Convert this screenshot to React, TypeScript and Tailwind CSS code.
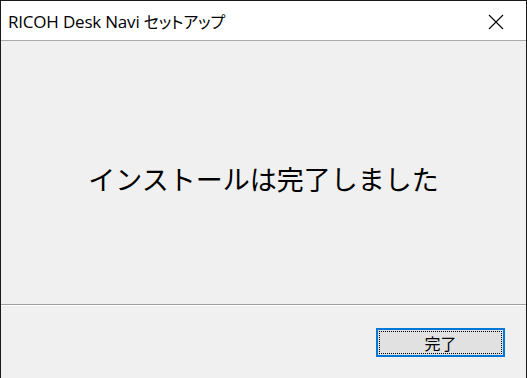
export default function App() {
  return (
    <div className="w-[527px] h-[378px] flex flex-col bg-[#f0f0f0] border-l border-r border-t border-[#1a1a1a] overflow-hidden">
      <div
        className="h-[39px] shrink-0 bg-white flex items-center justify-between pl-[7px] pr-[22px] text-black"
        style={{ fontFamily: '"Open Sans", "Noto Sans CJK JP", sans-serif' }}
      >
        <span className="leading-none mt-[1px] text-[17px] tracking-[-0.2px]">
          RICOH Desk Navi{" "}
          <span
            className="text-[16px]"
            style={{ fontFamily: '"Noto Sans CJK JP", sans-serif', fontFeatureSettings: '"palt"' }}
          >
            セットアップ
          </span>
        </span>
        <svg width="16" height="16" viewBox="0 0 16 16" className="mt-[2px]">
          <path d="M1 1 L15 15 M15 1 L1 15" stroke="#000" strokeWidth="1.1" />
        </svg>
      </div>
      <div className="h-px shrink-0 bg-[#a9a9a9]" />
      <div className="flex-1 flex items-center justify-center pt-[12px]">
        <span
          className="text-[27px] text-black leading-none"
          style={{ fontFamily: '"Noto Sans CJK JP", sans-serif' }}
        >
          インストールは完了しました
        </span>
      </div>
      <div className="h-px shrink-0 bg-[#a0a0a0]" />
      <div className="h-px shrink-0 bg-white" />
      <div className="h-[72px] shrink-0 flex justify-end items-start pt-[22px] pr-[21px]">
        <button className="w-[129px] h-[29px] border-2 border-[#0078d7] bg-[#e1e1e1] p-[1px] flex">
          <span
            className="flex-1 border border-dotted border-black flex items-center justify-center text-[16px] text-black leading-none"
            style={{ fontFamily: '"Noto Sans CJK JP", sans-serif' }}
          >
            完了
          </span>
        </button>
      </div>
    </div>
  );
}
